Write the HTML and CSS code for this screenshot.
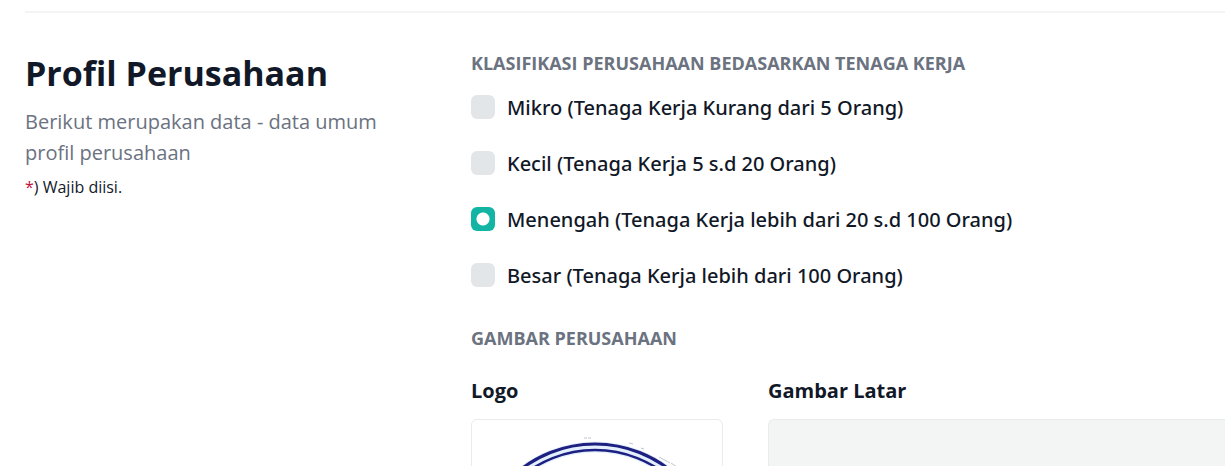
FILE: index.html
```html
<!DOCTYPE html>
<html lang="id">
<head>
<meta charset="utf-8">
<meta name="viewport" content="width=device-width, initial-scale=1">
<title>Profil Perusahaan</title>
<link rel="stylesheet" href="styles.css">
</head>
<body>
<main class="page">
  <section class="profile">
    <header class="intro">
      <h1 class="title">Profil Perusahaan</h1>
      <p class="description">Berikut merupakan data - data umum profil perusahaan</p>
      <p class="note"><span class="required">*</span>) Wajib diisi.</p>
    </header>
    <form class="fields">
      <fieldset class="group">
        <legend class="caption">KLASIFIKASI PERUSAHAAN BEDASARKAN TENAGA KERJA</legend>
        <div class="options">
          <label class="option"><input class="radio" type="radio" name="class" value="mikro"><span>Mikro (Tenaga Kerja Kurang dari 5 Orang)</span></label>
          <label class="option"><input class="radio" type="radio" name="class" value="kecil"><span>Kecil (Tenaga Kerja 5 s.d 20 Orang)</span></label>
          <label class="option"><input class="radio" type="radio" name="class" value="menengah" checked><span>Menengah (Tenaga Kerja lebih dari 20 s.d 100 Orang)</span></label>
          <label class="option"><input class="radio" type="radio" name="class" value="besar"><span>Besar (Tenaga Kerja lebih dari 100 Orang)</span></label>
        </div>
      </fieldset>
      <h2 class="caption">GAMBAR PERUSAHAAN</h2>
      <div class="images">
        <div class="image-field">
          <h3 class="label">Logo</h3>
          <div class="preview">
            <svg class="logo" viewBox="0 0 250 250" role="img" aria-label="Logo perusahaan">
              <circle cx="123" cy="145" r="118" fill="none" stroke="#e3effc" stroke-width="11"/>
              <circle cx="123" cy="145" r="121" fill="none" stroke="#1d2080" stroke-width="3"/>
              <circle cx="123" cy="145" r="115" fill="none" stroke="#1d2080" stroke-width="2.5"/>
              <path d="M112 18h3M116 18h3M157 23l4 1M169 28l3 1M187 37l11 6M199 43l6 4" fill="none" stroke="#bcc6cf" stroke-width="1"/>
            </svg>
          </div>
        </div>
        <div class="image-field">
          <h3 class="label">Gambar Latar</h3>
          <div class="preview preview-empty"></div>
        </div>
      </div>
    </form>
  </section>
</main>
</body>
</html>
```
FILE: styles.css
```css
* { box-sizing: border-box; }

body {
  margin: 0;
  height: 100vh;
  overflow: hidden;
  background: #fff;
  color: #111827;
  font-family: "Open Sans", "Noto Sans", sans-serif;
}

h1, h2, h3, p { margin: 0; }

.page {
  height: 100%;
  overflow: hidden;
  padding: 11px 0 0 25px;
}

.profile {
  display: grid;
  grid-template-columns: 398px minmax(0, 1fr);
  column-gap: 48px;
  padding-top: 38px;
  border-top: 2px solid #f3f4f6;
}

.title {
  font-size: 34px;
  line-height: 44px;
  font-weight: 700;
}

.description {
  margin-top: 11px;
  color: #6b7280;
  font-size: 20px;
  line-height: 31px;
}

.note {
  margin-top: 7px;
  font-size: 16px;
  line-height: 24px;
}

.required { color: #be123c; }

.group {
  margin: 0;
  padding: 0;
  border: 0;
}

.caption {
  padding: 0;
  color: #6b7280;
  font-size: 18px;
  line-height: 24px;
  font-weight: 700;
}

.options {
  display: grid;
  gap: 24px;
  padding: 17px 0 34px;
}

.option {
  display: flex;
  align-items: flex-start;
  gap: 12px;
  font-family: "Noto Sans", "Open Sans", sans-serif;
  font-size: 20px;
  line-height: 32px;
  font-weight: 500;
}

.radio {
  appearance: none;
  flex: none;
  width: 24px;
  height: 24px;
  margin: 3px 0 0;
  border-radius: 6px;
  background: #e3e6e9;
}

.radio:checked {
  background: radial-gradient(circle, #fff 6px, #12b5a4 7px);
}

.images {
  display: grid;
  grid-template-columns: 252px minmax(0, 1fr);
  column-gap: 45px;
  margin-top: 25px;
}

.label {
  font-size: 20px;
  line-height: 32px;
  font-weight: 700;
}

.preview {
  height: 252px;
  margin-top: 12px;
  overflow: hidden;
  border: 1px solid #e9ebed;
  border-radius: 6px;
}

.preview-empty {
  border-right: 0;
  border-radius: 6px 0 0 6px;
  background: #f3f4f4;
}

.logo {
  display: block;
  width: 100%;
}
```
